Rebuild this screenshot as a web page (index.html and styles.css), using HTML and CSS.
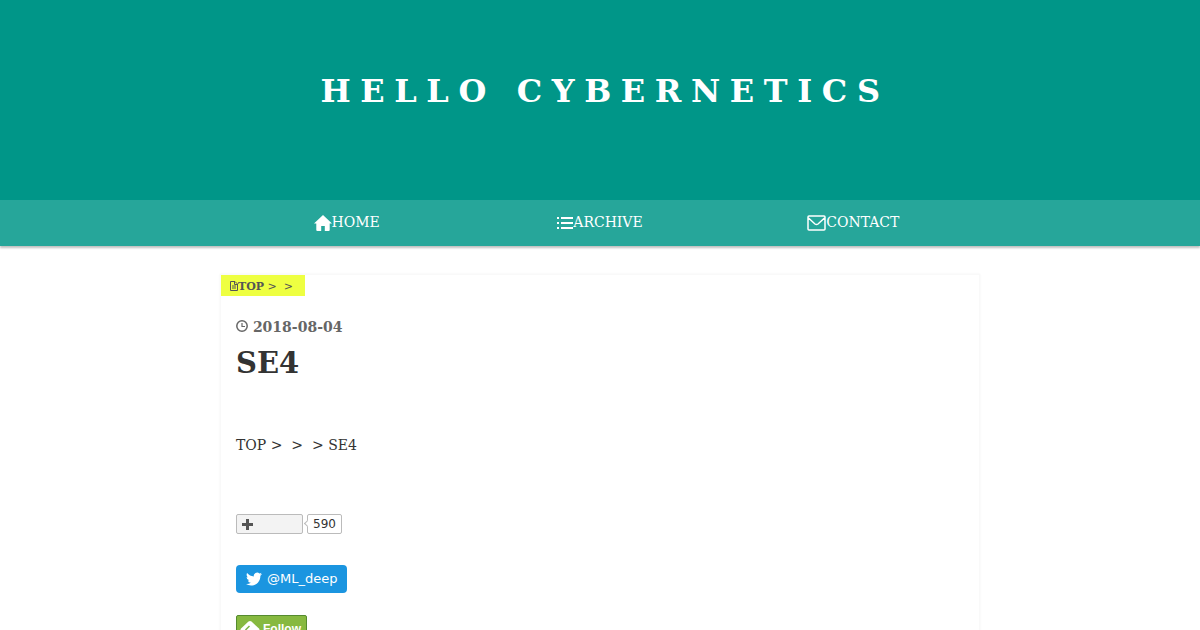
FILE: index.html
```
<!DOCTYPE html>
<html lang="ja">
<head>
    <meta charset="UTF-8">
    <meta name="viewport" content="width=device-width, initial-scale=1.0">
    <title>SE4 - HELLO CYBERNETICS</title>
    <link rel="stylesheet" href="styles.css">
</head>
<body>

<header class="blog-header">
    <h1 class="blog-title"><a href="#">HELLO CYBERNETICS</a></h1>
</header>

<nav class="menu">
    <ul class="menu-list">
        <li>
            <a href="#">
                <svg width="18" height="18" viewBox="0 0 18 18"><path d="M9 1L0 9.600h2.300V16q0 1 1 1h3.900v-5h3.600v5h3.900q1 0 1-1V9.600H18z" fill="currentColor"/></svg>HOME
            </a>
        </li>
        <li>
            <a href="#">
                <svg width="16" height="18" viewBox="0 0 16 18"><path d="M0 3h2v2H0zM4 3h12v2H4zM0 8h2v2H0zM4 8h12v2H4zM0 13h2v2H0zM4 13h12v2H4z" fill="currentColor"/></svg>ARCHIVE
            </a>
        </li>
        <li>
            <a href="#">
                <svg width="19" height="18" viewBox="0 0 19 18"><path d="M2 2h15q1 0 1 1v12q0 1-1 1H2q-1 0-1-1V3q0-1 1-1zM1.500 4l6.500 6q1.500 1.200 3 0l6.500-6" fill="none" stroke="currentColor" stroke-width="1.500"/></svg>CONTACT
            </a>
        </li>
    </ul>
</nav>

<main class="entry">
    <div class="category">
        <a href="#"><svg width="8" height="10" viewBox="0 0 8 10"><path d="M.5.5h4.500l2.500 2.500v6.500h-7zM4.500.5v3h3M2 5h4M2 7h4" fill="none" stroke="currentColor"/></svg>TOP</a> &gt; &nbsp;&gt;
    </div>
    <div class="entry-inner">
        <div class="date">
            <svg width="12" height="12" viewBox="0 0 12 12"><path d="M6 3v3.500h3" fill="none" stroke="currentColor" stroke-width="1.200"/><circle cx="6" cy="6" r="5.200" fill="none" stroke="currentColor" stroke-width="1.500"/></svg>
            <time datetime="2018-08-04">2018-08-04</time>
        </div>
        <h2 class="entry-title"><a href="#">SE4</a></h2>
        <p class="breadcrumb"><a href="#">TOP</a> &gt; &nbsp;&gt; &nbsp;&gt; SE4</p>

        <div class="star">
            <button type="button" class="star-btn" aria-label="Add star">
                <svg width="11" height="11" viewBox="0 0 11 11"><path d="M4 0h3v4h4v3H7v4H4V7H0V4h4z" fill="#555"/></svg>
            </button>
            <a href="#" class="star-count">590</a>
        </div>

        <a href="#" class="twitter-btn">
            <svg width="16" height="16" viewBox="0 0 24 24"><path d="M23.950 4.570a10 10 0 0 1-2.820.770 4.960 4.960 0 0 0 2.160-2.720c-.950.550-2 .950-3.130 1.180a4.920 4.920 0 0 0-8.380 4.480C7.690 8.090 4.070 6.130 1.640 3.160a4.820 4.820 0 0 0-.670 2.480c0 1.710.870 3.210 2.190 4.100a4.900 4.900 0 0 1-2.230-.620v.060a4.920 4.920 0 0 0 3.950 4.830 5 5 0 0 1-2.210.080 4.940 4.940 0 0 0 4.600 3.420A9.870 9.870 0 0 1 0 19.540a14 14 0 0 0 7.550 2.210c9.050 0 14-7.500 14-13.980 0-.210 0-.420-.020-.630a9.940 9.940 0 0 0 2.420-2.570z" fill="currentColor"/></svg>
            @ML_deep
        </a>

        <a href="#" class="feedly-btn">
            <svg width="20" height="18" viewBox="0 0 20 18"><path d="M8.500 1.600q1.500-1.200 3 0l7.500 7q1 1.200 0 2.400L13 17H7l-6-6q-1-1.200 0-2.400z" fill="#fff"/><path d="M5.500 10l4-4M8 13l2.500-2.500" fill="none" stroke="#7cb342" stroke-width="1.500"/></svg>
            Follow
        </a>
    </div>
</main>

</body>
</html>
```
FILE: styles.css
```
body {
    margin: 0;
    background-color: #fff;
    color: #333;
    font-family: "DejaVu Serif", serif;
    font-size: 14px;
    line-height: 24px;
}
a {
    color: inherit;
    text-decoration: none;
}
.blog-header {
    padding: 67px 16px 85px;
    background-color: #009688;
    text-align: center;
}
.blog-title {
    margin: 0;
    padding-left: 10px;
    color: #fff;
    font-size: 32px;
    line-height: 48px;
    letter-spacing: 0.3em;
}
.menu {
    background-color: #26a69a;
    color: #fff;
    box-shadow: 0 2px 2px rgba(0, 0, 0, 0.25);
}
.menu-list {
    display: flex;
    max-width: 760px;
    margin: 0 auto;
    padding: 0;
    list-style: none;
}
.menu-list li {
    flex: 1;
}
.menu-list a {
    display: flex;
    justify-content: center;
    padding: 10px 0 12px;
}
.menu-list svg {
    margin-top: 4px;
}
.entry {
    box-sizing: border-box;
    max-width: 760px;
    margin: 28px auto;
    border: 1px solid #f9f9f9;
    box-shadow: 0 0 2px rgba(0, 0, 0, 0.06);
}
.category {
    width: fit-content;
    padding: 3px 12px 0 9px;
    background-color: #eeff41;
    color: #555;
    font-size: 11px;
    line-height: 18px;
}
.category a {
    font-weight: bold;
}
.category svg {
    vertical-align: -1px;
}
.entry-inner {
    padding: 19px 15px 40px;
}
.date {
    color: #666;
    font-weight: bold;
}
.entry-title {
    margin: 4px 0 0;
    font-size: 29px;
    line-height: 40px;
}
.breadcrumb {
    margin: 50px 0 57px;
}
.star {
    display: flex;
    gap: 4px;
    margin-bottom: 31px;
    font-family: "DejaVu Sans", sans-serif;
    font-size: 12px;
    line-height: 18px;
}
.star-btn {
    display: flex;
    align-items: center;
    width: 67px;
    padding: 0 5px;
    border: 1px solid #bbb;
    border-radius: 2px;
    background-color: #f3f3f3;
}
.star-count {
    position: relative;
    padding: 0 5px;
    border: 1px solid #bbb;
    border-radius: 2px;
    background-color: #fff;
}
.star-count::before {
    content: "";
    position: absolute;
    top: 6px;
    left: -3px;
    width: 4px;
    height: 4px;
    border: solid #bbb;
    border-width: 0 0 1px 1px;
    background-color: #fff;
    transform: rotate(45deg);
}
.twitter-btn {
    display: flex;
    align-items: center;
    gap: 5px;
    width: fit-content;
    margin-bottom: 22px;
    padding: 0 10px;
    border-radius: 4px;
    background-color: #1b95e0;
    color: #fff;
    font-family: "DejaVu Sans", sans-serif;
    font-size: 13px;
    line-height: 28px;
}
.feedly-btn {
    display: flex;
    align-items: center;
    gap: 3px;
    width: fit-content;
    padding: 0 5px 0 3px;
    border: 1px solid #558b2f;
    border-radius: 2px;
    background-color: #87b940;
    color: #fff;
    font-family: "Liberation Sans", sans-serif;
    font-size: 12px;
    font-weight: bold;
    line-height: 26px;
}
```
